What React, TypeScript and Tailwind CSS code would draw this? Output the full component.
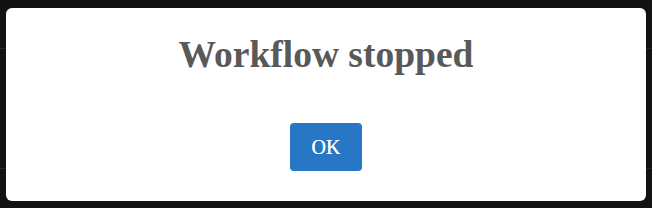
export default function App() {
  return (
    <div className="relative h-[208px] w-[652px] overflow-hidden bg-[#121212] font-['Liberation_Serif',serif]">
      <div className="absolute left-0 right-0 top-[48px] h-px bg-[#262626]" />
      <div className="absolute left-0 right-0 top-[168px] h-px bg-[#262626]" />
      <div className="absolute left-[6px] top-[8px] flex h-[193px] w-[640px] flex-col items-center rounded-md bg-white">
        <h1 className="mt-[24px] text-[37.5px] font-bold leading-[45px] text-[#595959]">
          Workflow stopped
        </h1>
        <button className="mt-[46px] h-[48px] w-[72px] rounded-[4px] bg-[#2877c7] text-[20px] text-white [text-shadow:0_0_0.4px_white]">
          OK
        </button>
      </div>
    </div>
  );
}
